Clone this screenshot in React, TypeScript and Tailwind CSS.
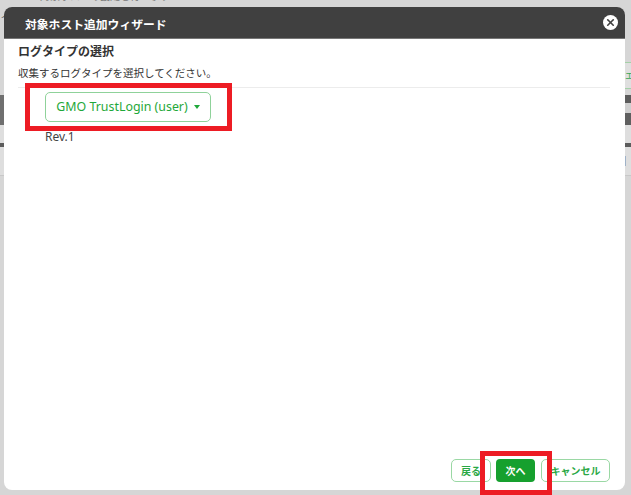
import React from 'react';
import { X } from 'lucide-react';

const font = "font-['Noto_Sans_CJK_JP','Noto_Sans',sans-serif]";

// faint page behind the overlay, only its edges show round the dialog
const RightEdge: React.FC = () => (
  <div className="w-[6px] shrink-0 flex flex-col pt-[62px] overflow-hidden">
    <div className="h-[27px] bg-[#dfdfdf] border-y border-[#a5d0a8] flex items-center text-[9px] leading-none text-[#3aa655] overflow-hidden">
      <span>エ</span>
    </div>
    <div className="mt-[6px] h-[8px] bg-[#5c5c5c]" />
    <div className="h-[10px] bg-[#cfcfcf]" />
    <div className="h-[12px] bg-[#5f5f5f]" />
    <div className="h-[18px] bg-[#dedede]" />
    <div className="h-[4px] bg-[#5c5c5c]" />
    <div className="h-[28px] bg-[#dedede]">
      <div className="mt-[9px] h-[10px] w-[1px] bg-[#9fb2c8]" />
    </div>
    <div className="h-[1px] bg-[#c8c8c8]" />
  </div>
);

const LeftEdge: React.FC = () => (
  <div className="w-[4px] shrink-0 flex flex-col pt-[9px] overflow-hidden">
    <span className="h-[86px] text-[10px] leading-[10px] text-[#666]">ノ</span>
    <div className="h-[30px] bg-[#6f6f6f]" />
    <div className="h-[18px] bg-[#dedede]" />
    <div className="h-[4px] bg-[#5c5c5c]" />
    <div className="h-[28px] bg-[#dedede]" />
    <div className="h-[1px] bg-[#c8c8c8]" />
  </div>
);

const App: React.FC = () => {
  return (
    <div className={`${font} relative w-[631px] h-[495px] bg-[#d6d6d6] flex overflow-hidden`}>
      <LeftEdge />
      <div className="w-[621px] h-[483px] mt-[7px] shrink-0 flex flex-col rounded-[8px] bg-white">
        <div className="h-[32px] shrink-0 bg-[#404040] rounded-t-[8px] flex items-center justify-between pl-[21px] pr-[7px] border-b border-[#777]">
          <span className="text-[11.8px] font-bold text-white translate-y-[1px]">対象ホスト追加ウィザード</span>
          <span className="w-[15px] h-[15px] rounded-full bg-white flex items-center justify-center">
            <X size={11} strokeWidth={3.5} className="text-[#404040]" />
          </span>
        </div>
        <div className="flex-1 flex flex-col pl-[14px] pr-[15px] pt-[1px] pb-[8px]">
          <h2 className="text-[12px] leading-[22px] font-bold text-[#333]">ログタイプの選択</h2>
          <p className="mt-[3px] text-[10.5px] leading-[16px] text-[#333]">収集するログタイプを選択してください。</p>
          <div className="mt-[6px] border-t border-[#ececec] pl-[27px] pt-[4px]">
            <button className="h-[30px] w-[166px] rounded-[5px] border border-[#8fd29a] bg-white flex items-center justify-center gap-[6px] text-[12.4px] text-[#1fa83a] font-['Noto_Sans',sans-serif]">
              GMO TrustLogin (user)
              <span className="w-0 h-0 border-x-[3.5px] border-x-transparent border-t-[4px] border-t-[#1fa83a]" />
            </button>
            <p className="mt-[7px] text-[12px] leading-[16px] text-[#444] font-['Noto_Sans',sans-serif]">Rev.1</p>
          </div>
          <div className="mt-auto flex justify-end">
            <button className="h-[23px] w-[40px] rounded-[5px] border border-[#9ad8a4] text-[10px] font-bold text-[#2aa845]">戻る</button>
            <button className="ml-[5px] h-[23px] w-[39px] rounded-[4px] bg-[#16a02e] text-[10px] font-bold text-white">次へ</button>
            <button className="ml-[6px] h-[23px] w-[69px] rounded-[5px] border border-[#9ad8a4] text-[10px] font-bold text-[#2aa845]">キャンセル</button>
          </div>
        </div>
      </div>
      <RightEdge />
      {/* clipped line of the page behind, red callouts on top of the screenshot */}
      <div className="absolute left-[40px] top-0 h-[2px] overflow-hidden">
        <span className="block -mt-[9px] text-[10px] leading-[10px] text-[#777] whitespace-nowrap">対象ホストの設定を行います</span>
      </div>
      <div className="absolute left-[25px] top-[83px] w-[207px] h-[48px] border-[5px] border-[#ed1c24]" />
      <div className="absolute left-[480px] top-[451px] w-[72px] h-[44px] border-[5px] border-[#ed1c24]" />
    </div>
  );
};

export default App;
